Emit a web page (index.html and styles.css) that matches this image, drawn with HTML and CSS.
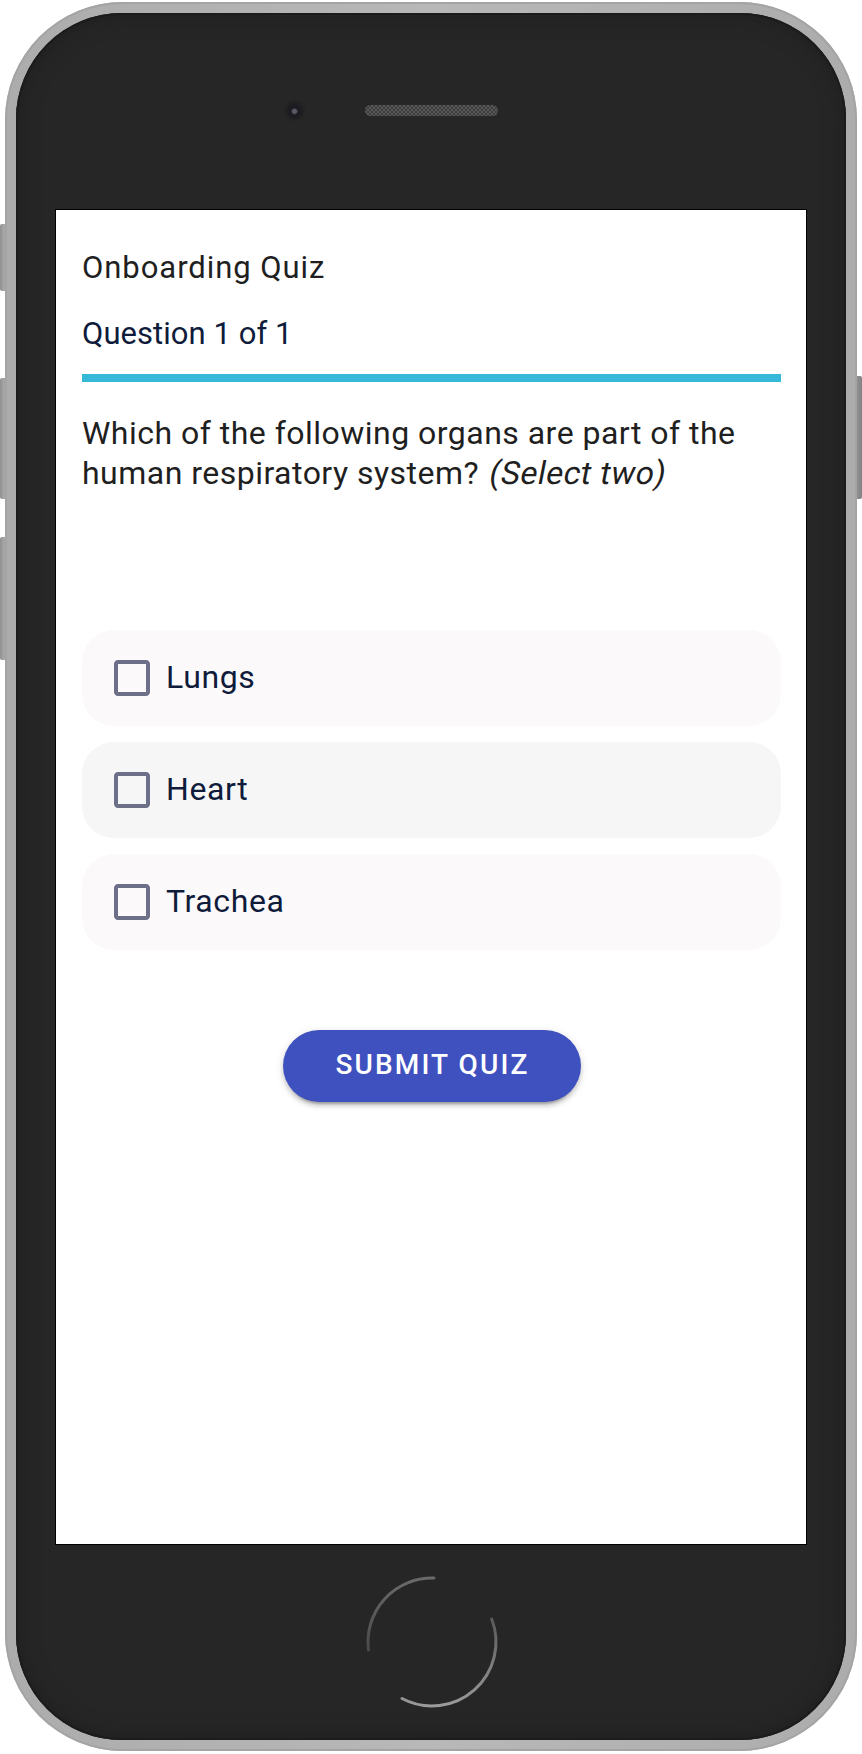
FILE: index.html
```html
<!DOCTYPE html>
<html lang="en">
<head>
<meta charset="utf-8">
<title>Onboarding Quiz</title>
<link rel="stylesheet" href="styles.css">
</head>
<body>
<div class="device">
  <span class="side-btn side-btn--mute"></span>
  <span class="side-btn side-btn--vol-up"></span>
  <span class="side-btn side-btn--vol-down"></span>
  <span class="side-btn side-btn--power"></span>
  <div class="rim">
    <div class="shell">
      <div class="top">
        <span class="camera"></span>
        <span class="speaker"></span>
        <span class="top-spacer"></span>
      </div>
      <main class="screen">
        <h1 class="title">Onboarding Quiz</h1>
        <p class="count">Question 1 of 1</p>
        <div class="progress"><div class="progress-fill" style="width:100%"></div></div>
        <p class="question">Which of the following organs are part of the human respiratory system? <span class="hint">(Select two)</span></p>
        <div class="options">
          <label class="option">
            <svg class="check" viewBox="0 0 24 24"><path d="M19 5v14H5V5h14m0-2H5c-1.1 0-2 .9-2 2v14c0 1.1.9 2 2 2h14c1.1 0 2-.9 2-2V5c0-1.1-.9-2-2-2z"/></svg>
            <span class="option-label">Lungs</span>
          </label>
          <label class="option option--hover">
            <svg class="check" viewBox="0 0 24 24"><path d="M19 5v14H5V5h14m0-2H5c-1.1 0-2 .9-2 2v14c0 1.1.9 2 2 2h14c1.1 0 2-.9 2-2V5c0-1.1-.9-2-2-2z"/></svg>
            <span class="option-label">Heart</span>
          </label>
          <label class="option">
            <svg class="check" viewBox="0 0 24 24"><path d="M19 5v14H5V5h14m0-2H5c-1.1 0-2 .9-2 2v14c0 1.1.9 2 2 2h14c1.1 0 2-.9 2-2V5c0-1.1-.9-2-2-2z"/></svg>
            <span class="option-label">Trachea</span>
          </label>
        </div>
        <div class="actions">
          <button class="submit" type="button">Submit Quiz</button>
        </div>
      </main>
      <div class="bottom">
        <svg class="home" viewBox="0 0 140 140" width="140" height="140">
          <defs>
            <linearGradient id="arcA" x1="0" y1="0" x2="0" y2="1">
              <stop offset="0" stop-color="#6a6a6a"/>
              <stop offset="1" stop-color="#4a4a4a"/>
            </linearGradient>
            <linearGradient id="arcB" x1="0" y1="0" x2="0" y2="1">
              <stop offset="0" stop-color="#5a5a5a"/>
              <stop offset="1" stop-color="#9a9a9a"/>
            </linearGradient>
          </defs>
          <path class="home-arc" stroke="url(#arcA)" d="M72 6 A64 64 0 0 0 6.5 78"/>
          <path class="home-arc" stroke="url(#arcB)" d="M129.7 47 A64 64 0 0 1 40 126.5"/>
        </svg>
      </div>
    </div>
  </div>
</div>
</body>
</html>
```
FILE: styles.css
```css
* { box-sizing: border-box; }

html, body {
  margin: 0;
  padding: 0;
  background: #ffffff;
}

body {
  width: 862px;
  height: 1754px;
  overflow: hidden;
  font-family: Roboto, "Noto Sans", "Liberation Sans", sans-serif;
}

.device {
  position: relative;
  width: 852px;
  height: 1749px;
  margin: 2px 0 0 5px;
}

.side-btn {
  position: absolute;
  background: linear-gradient(90deg, #8f8f8f, #a9a9a9 60%, #8a8a8a);
  border-radius: 2px;
}
.side-btn--mute { left: -5px; top: 222px; width: 7px; height: 67px; }
.side-btn--vol-up { left: -5px; top: 376px; width: 7px; height: 121px; }
.side-btn--vol-down { left: -5px; top: 535px; width: 7px; height: 123px; }
.side-btn--power { right: -5px; top: 374px; width: 8px; height: 123px; background: linear-gradient(90deg, #9a9a9a, #828282); }

.rim {
  position: relative;
  height: 100%;
  padding: 11px;
  border-radius: 118px;
  background: linear-gradient(90deg, #acacac, #b8b8b8 50%, #acacac);
  box-shadow: inset 0 0 0 2px #a4a4a4;
}

.shell {
  height: 100%;
  border-radius: 106px;
  background: #262626;
  box-shadow: inset 0 0 0 2px #1c1c1c, inset 0 0 18px 4px #202020;
  display: flex;
  flex-direction: column;
  padding: 0 40px;
}

.top {
  height: 197px;
  padding-top: 89px;
  display: grid;
  grid-template-columns: 1fr auto 1fr;
  align-items: start;
}

.camera {
  justify-self: end;
  width: 17px;
  height: 17px;
  margin-right: 62px;
  border-radius: 50%;
  background: radial-gradient(circle at 50% 55%, #5a5a64 0 2px, #1a1a20 3.5px, #1e1e22 60%, #2d2d30 100%);
  box-shadow: 0 0 3px #1a1a1a;
}

.speaker {
  width: 133px;
  height: 11px;
  margin-top: 3px;
  border-radius: 6px;
  background-color: #3e3e3e;
  background-image:
    linear-gradient(45deg, #575757 25%, transparent 25%, transparent 75%, #575757 75%),
    linear-gradient(45deg, #575757 25%, transparent 25%, transparent 75%, #575757 75%);
  background-size: 4px 4px;
  background-position: 0 0, 2px 2px;
  box-shadow: 0 0 2px #2f2f2f;
}

.screen {
  width: 750px;
  height: 1334px;
  background: #ffffff;
  box-shadow: 0 0 0 1px #000;
  padding: 38px 25px 0 26px;
  display: flex;
  flex-direction: column;
}

.title {
  margin: 0;
  font-size: 31px;
  line-height: 40px;
  font-weight: 400;
  color: #1f1f1f;
  letter-spacing: 0.95px;
}

.count {
  margin: 26px 0 0;
  font-size: 31px;
  line-height: 40px;
  color: #0f1b3a;
  letter-spacing: 0.05px;
}

.progress {
  margin-top: 20px;
  height: 8px;
  background: #b2e3f0;
}
.progress-fill {
  height: 100%;
  background: #36b8d9;
}

.question {
  margin: 31px 0 0;
  font-size: 32px;
  line-height: 40px;
  color: #1f1f1f;
  letter-spacing: 0.48px;
}
.hint {
  display: inline-block;
  font-style: normal;
  transform: skewX(-11deg);
  transform-origin: 0 75%;
}

.options {
  margin-top: 137px;
  display: flex;
  flex-direction: column;
  gap: 16px;
}

.option {
  height: 96px;
  border-radius: 32px;
  background: #fbf9fa;
  display: flex;
  align-items: center;
  padding-left: 26px;
  padding-bottom: 1px;
  gap: 10px;
}
.option--hover {
  background: #f6f6f6;
}

.check {
  width: 48px;
  height: 48px;
  fill: #6c6f87;
  flex: none;
  margin-top: 1px;
}

.option-label {
  font-size: 32px;
  line-height: 40px;
  color: #0f1b3a;
  letter-spacing: 0.6px;
  margin-bottom: 2px;
}

.actions {
  margin-top: 80px;
  display: flex;
  justify-content: center;
}

.submit {
  width: 298px;
  height: 72px;
  border: 0;
  border-radius: 36px;
  background: #3f51bf;
  color: #ffffff;
  font-family: Roboto, "Noto Sans", sans-serif;
  font-size: 28px;
  line-height: 32px;
  font-weight: 500;
  letter-spacing: 2.1px;
  text-transform: uppercase;
  padding: 0 0 3px 2px;
  box-shadow: 0 6px 2px -4px rgba(0,0,0,0.2), 0 4px 4px 0 rgba(0,0,0,0.14), 0 2px 10px 0 rgba(0,0,0,0.12);
}

.bottom {
  flex: 1;
  display: flex;
  align-items: center;
  justify-content: center;
  padding-left: 2px;
}

.home {
  filter: blur(0.5px);
}

.home-arc {
  fill: none;
  stroke-width: 3;
  stroke-linecap: round;
}
```
